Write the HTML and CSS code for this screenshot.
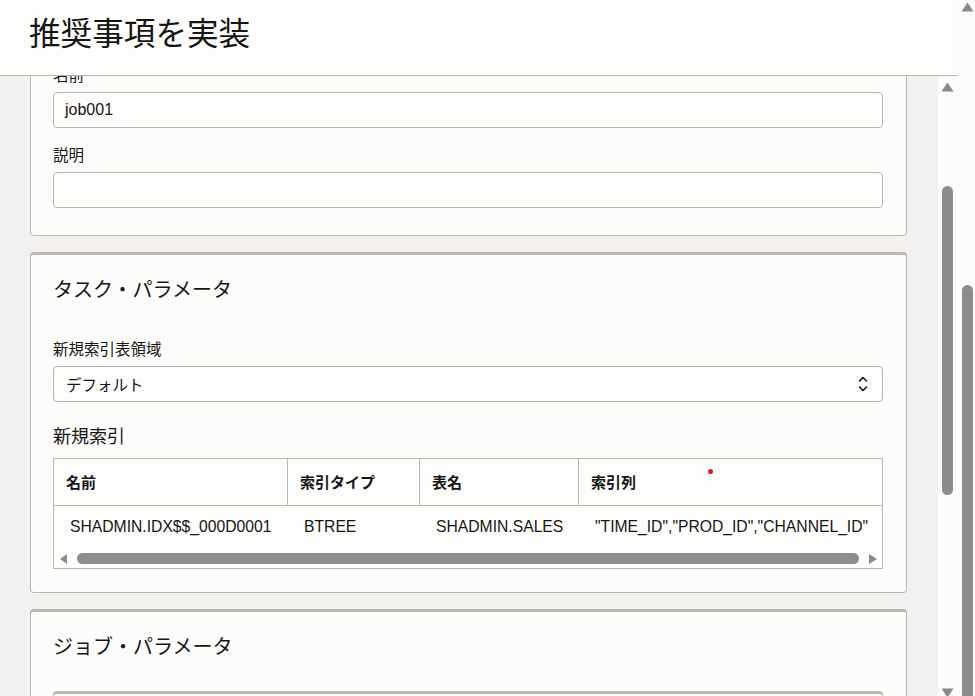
FILE: index.html
```html
<!DOCTYPE html>
<html lang="ja">
<head>
<meta charset="utf-8">
<title>推奨事項を実装</title>
<link rel="stylesheet" href="styles.css">
</head>
<body>
<div class="window">
  <div class="main">
    <header class="dlg-header">
      <h1 class="dlg-title">推奨事項を実装</h1>
    </header>
    <div class="dlg-body">
      <div class="content">
        <section class="card card-first">
          <div class="field">
            <label class="field-label">名前</label>
            <div class="input">job001</div>
          </div>
          <div class="field field-last">
            <label class="field-label">説明</label>
            <div class="input"></div>
          </div>
        </section>

        <section class="card card-acc">
          <h2 class="card-title card-title-task">タスク・パラメータ</h2>
          <div class="field field-select">
            <label class="field-label">新規索引表領域</label>
            <div class="input select">
              <span>デフォルト</span>
              <svg class="chev" width="10" height="16" viewBox="0 0 10 16"><path d="M1.5 5 L5 1.5 L8.5 5" /><path d="M1.5 11 L5 14.5 L8.5 11" /></svg>
            </div>
          </div>
          <h3 class="sub-title">新規索引</h3>
          <div class="grid-table">
            <div class="gt-row gt-head">
              <div class="gt-cell">名前</div>
              <div class="gt-cell">索引タイプ</div>
              <div class="gt-cell">表名</div>
              <div class="gt-cell gt-last">索引列<span class="cursor-dot"></span></div>
            </div>
            <div class="gt-row gt-data">
              <div class="gt-cell">SHADMIN.IDX$$_000D0001</div>
              <div class="gt-cell">BTREE</div>
              <div class="gt-cell">SHADMIN.SALES</div>
              <div class="gt-cell gt-last">"TIME_ID","PROD_ID","CHANNEL_ID"</div>
            </div>
            <div class="hscroll">
              <svg class="harrow" width="7" height="10" viewBox="0 0 7 10"><polygon points="7,0 7,10 0,5"/></svg>
              <div class="hthumb"></div>
              <svg class="harrow" width="8" height="10" viewBox="0 0 8 10"><polygon points="0,0 8,5 0,10"/></svg>
            </div>
          </div>
        </section>

        <section class="card card-acc card-last">
          <h2 class="card-title">ジョブ・パラメータ</h2>
          <div class="sub-box"></div>
        </section>
      </div>
      <div class="vscroll vscroll-inner">
        <svg class="varrow" width="13" height="10" viewBox="0 0 13 10"><polygon points="6.5,0.5 12.5,9.5 0.5,9.5"/></svg>
        <div class="vthumb vthumb-inner"></div>
        <svg class="varrow varrow-down" width="13" height="10" viewBox="0 0 13 10"><polygon points="0.5,0.5 12.5,0.5 6.5,9.5"/></svg>
      </div>
    </div>
  </div>
  <div class="vscroll vscroll-outer">
    <svg class="varrow" width="13" height="10" viewBox="0 0 13 10"><polygon points="6.5,0.5 12.5,9.5 0.5,9.5"/></svg>
    <div class="vthumb vthumb-outer"></div>
  </div>
</div>
</body>
</html>
```

FILE: styles.css
```css
* { box-sizing: border-box; }

html, body {
  margin: 0;
  padding: 0;
  height: 100%;
  overflow: hidden;
  background: #fcfcfb;
}

body {
  font-family: "Liberation Sans", "Noto Sans CJK JP", sans-serif;
  color: #161513;
}

.window {
  display: flex;
  height: 700px;
  width: 975px;
  overflow: hidden;
}

.main {
  width: 958px;
  display: flex;
  flex-direction: column;
  min-height: 0;
}

.dlg-header {
  height: 76px;
  flex: none;
  background: #fdfdfc;
  border-bottom: 1px solid #b9b5af;
  display: flex;
  align-items: center;
  padding: 0 30px 14px 29px;
}

.dlg-title {
  margin: 0;
  font-size: 31.6px;
  font-weight: 400;
  line-height: 40px;
  font-family: "Noto Sans CJK JP", sans-serif;
}

.dlg-body {
  flex: 1;
  display: flex;
  min-height: 0;
}

.content {
  width: 938px;
  flex: none;
  background: #f2f1ef;
  padding: 0 31px 0 30px;
  overflow: hidden;
}

.card {
  background: #fcfcfb;
  border: 1px solid #bcb7b0;
  border-radius: 4px;
  padding: 20px 23px 23px 22px;
  margin-bottom: 16px;
}

.card-first {
  margin-top: -37px;
  padding-top: 24px;
  padding-bottom: 27px;
}

.card-acc {
  border-top: 3px solid #bcb7b0;
}

.card-title {
  margin: 0 0 31px;
  font-size: 20px;
  line-height: 28px;
  font-weight: 400;
  font-family: "Noto Sans CJK JP", sans-serif;
}

.card-title-task { margin-bottom: 35px; }

.field { margin-bottom: 16px; }
.field-last { margin-bottom: 0; }
.field-select { margin-bottom: 21px; }

.field-label {
  display: block;
  font-size: 15.5px;
  line-height: 20px;
  margin-bottom: 8px;
  font-family: "Noto Sans CJK JP", sans-serif;
}

.input {
  height: 36px;
  border: 1px solid #b9b5ae;
  border-radius: 4px;
  background: #fdfdfc;
  padding: 0 12px 0 11px;
  font-size: 16px;
  line-height: 34px;
}

.select {
  display: flex;
  align-items: center;
  justify-content: space-between;
  padding-left: 12px;
  padding-right: 14px;
  font-family: "Noto Sans CJK JP", sans-serif;
  font-size: 15.5px;
}

.chev path {
  fill: none;
  stroke: #161513;
  stroke-width: 1.6;
  stroke-linecap: round;
  stroke-linejoin: round;
}

.sub-title {
  margin: 0 0 11px;
  font-size: 18px;
  line-height: 24px;
  font-weight: 400;
  font-family: "Noto Sans CJK JP", sans-serif;
}

.grid-table {
  border: 1px solid #bcb7b0;
  background: #fdfdfc;
}

.gt-row {
  display: grid;
  grid-template-columns: 234px 132px 159px 1fr;
}

.gt-head {
  height: 47px;
  border-bottom: 1px solid #bcb7b0;
}

.gt-head .gt-cell {
  border-right: 1px solid #bcb7b0;
  padding-left: 12px;
  font-weight: 700;
  font-size: 15px;
  line-height: 46px;
  font-family: "Noto Sans CJK JP", sans-serif;
}

.gt-head .gt-last {
  border-right: none;
  position: relative;
}

.gt-data {
  height: 42px;
}

.gt-data .gt-cell {
  padding-left: 16px;
  font-size: 15.7px;
  line-height: 42px;
  white-space: nowrap;
}

.cursor-dot {
  position: absolute;
  left: 129px;
  top: 10px;
  width: 5px;
  height: 5px;
  border-radius: 50%;
  background: #e8141c;
}

.hscroll {
  height: 20px;
  display: flex;
  align-items: center;
  padding: 1px 5px 0 6px;
}

.harrow { fill: #8a8a8a; flex: none; }

.hthumb {
  flex: 1;
  height: 11px;
  border-radius: 6px;
  background: #8c8c8c;
  margin: 0 10px;
}

.sub-box {
  height: 40px;
  border: 1px solid #bcb7b0;
  border-top: 3px solid #bcb7b0;
  border-radius: 4px 4px 0 0;
}

.vscroll {
  background: #fbfbfa;
  display: flex;
  flex-direction: column;
  align-items: center;
}

.vscroll-inner {
  width: 20px;
  padding: 6px 1px 2px 0;
}

.vscroll-outer {
  width: 17px;
  padding: 2px 0 0 1px;
}

.varrow { fill: #8a8a8a; flex: none; }
.varrow-down { margin-top: auto; }

.vthumb {
  width: 11px;
  border-radius: 6px;
  background: #8c8c8c;
  flex: none;
}

.vthumb-inner {
  margin-top: 94px;
  height: 309px;
}

.vthumb-outer {
  margin-top: 273px;
  height: 500px;
}
```
